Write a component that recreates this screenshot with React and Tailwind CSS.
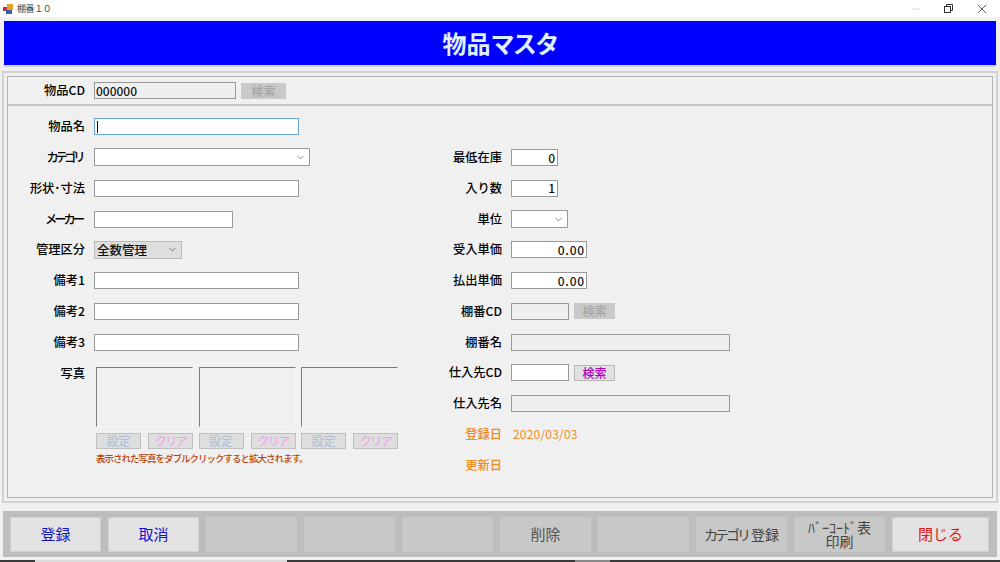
import { X, Minus, ChevronDown } from 'lucide-react';

const jp = 'font-["Noto_Sans_CJK_JP","Noto_Sans",sans-serif]';

// Right-aligned field label, wide enough to reach the input column
function Label({ children, className = 'text-black', width = 'w-[85px]' }) {
  return <div className={`${width} shrink-0 text-right text-[12.25px] leading-[17px] font-medium ${className}`}>{children}</div>;
}

function Box({ width, children, off, focus }) {
  const look = focus ? 'border-[#69a6d6] bg-white' : off ? 'border-[#999] bg-[#efefef]' : 'border-[#999] bg-white';
  return <div className={`h-[17px] shrink-0 border flex items-center px-[1px] text-[12px] font-medium text-[#111] ${look} ${width}`}>{children}</div>;
}

function Num({ width, value }) {
  return <Box width={width}><span className="ml-auto tracking-[0.8px]">{value}</span></Box>;
}

function Combo({ width, value, gray }) {
  return (
    <div className={`h-[18px] shrink-0 border flex items-center pl-[2px] pr-[3px] text-[12.5px] font-medium text-[#111] ${gray ? 'bg-[#dedede] border-[#bbb]' : 'bg-white border-[#999]'} ${width}`}>
      <span>{value}</span>
      <ChevronDown size={11} strokeWidth={1.6} className="ml-auto text-[#555]" />
    </div>
  );
}

function Search({ active, width = 'w-[41px]' }) {
  return (
    <div className={`h-[16px] shrink-0 flex items-center justify-center text-[12px] font-medium ${width} ${active ? 'bg-[#e1e1e1] border border-[#b8b8b8] text-[#b000c0]' : 'bg-[#c9c9c9] text-[#a5a5a5]'}`}>検索</div>
  );
}

function Row({ label, children, labelClass, width }) {
  return (
    <div className="h-[17px] flex items-center">
      <Label className={labelClass} width={width}>{label}</Label>
      <div className="flex items-center gap-[5px] ml-[9px]">{children}</div>
    </div>
  );
}

function PhotoCol() {
  return (
    <div className="w-[97px]">
      <div className="h-[60px] border border-t-[#7c7c7c] border-l-[#7c7c7c] border-r-[#f8f8f8] border-b-[#f8f8f8]"></div>
      <div className="flex justify-between mt-[6px]">
        <div className="h-[16px] w-[45px] bg-[#dedede] border border-[#c0c0c0] flex items-center justify-center text-[12px] text-[#a9bdd8]">設定</div>
        <div className="h-[16px] w-[45px] bg-[#dedede] border border-[#c0c0c0] flex items-center justify-center text-[12px] text-[#f19cef]"><span className="tracking-[-1.5px]">クリア</span></div>
      </div>
    </div>
  );
}

function FootBtn({ children, className = '', off }) {
  return (
    <div className={`h-[35px] flex items-center justify-center text-center leading-[14px] ${off ? 'bg-[#c8c8c8]' : 'bg-[#e3e3e3] border border-[#d0d0d0]'} ${className}`}>{children}</div>
  );
}

export default function App() {
  return (
    <div className={`w-[1000px] h-[562px] overflow-hidden bg-[#f0f0f0] flex flex-col ${jp}`}>
      {/* title bar */}
      <div className="h-[17px] bg-white flex items-center pl-[3px] pr-[10px] shrink-0">
        <svg width="10" height="10" viewBox="0 0 10 10">
          <rect x="4" y="0" width="6" height="6" fill="#e8a020" />
          <rect x="0" y="3" width="4" height="4" fill="#c83030" />
          <rect x="3" y="6" width="6" height="4" fill="#3060b0" />
        </svg>
        <span className="ml-[4px] text-[9px] text-[#444] tracking-[-0.4px]">棚番１０</span>
        <Minus size={12} strokeWidth={1} className="ml-auto text-[#aaa]" />
        <svg width="9" height="9" viewBox="0 0 9 9" fill="none" stroke="#333" strokeWidth="1" className="ml-[22px]">
          <rect x="0.5" y="2.5" width="6" height="6" />
          <path d="M2.5 2.5V0.5H8.5V6.5H6.5" />
        </svg>
        <X size={16} strokeWidth={1.2} className="ml-[21px] text-[#333]" />
      </div>

      {/* blue header */}
      <div className="mt-[4px] mx-[4px] h-[46px] shrink-0 bg-[#0000ff] border-b-2 border-b-[#d0d0ee] flex items-center justify-center">
        <h1 className="text-[24px] leading-none font-bold text-[#dff0ff]">物品<span className="tracking-[-1.7px]">マスタ</span></h1>
      </div>

      {/* main panel */}
      <div className="mt-[4px] mx-[2px] h-[432px] shrink-0 border-2 border-[#d2d2d2] p-[3px]">
        <div className="h-full border border-[#b4b4b4] flex flex-col">
          <div className="h-[29px] shrink-0 border-b-2 border-[#c6c6c6] flex items-center">
            <Row label="物品CD" width="w-[77px]">
              <Box width="w-[142px]" off>000000</Box>
              <Search width="w-[45px]" />
            </Row>
          </div>

          <div className="flex-1 flex">
            {/* left column */}
            <div className="w-[415px] shrink-0 pt-[12px] flex flex-col gap-[13.85px]">
              <Row label="物品名" width="w-[77px]"><Box width="w-[205px]" focus><span className="w-px h-[12px] bg-black ml-[1px]"></span></Box></Row>
              <Row label={<span className="tracking-[-3.4px] pr-[3px]">カテゴリ</span>} width="w-[77px]"><Combo width="w-[216px]" /></Row>
              <Row label="形状･寸法" width="w-[77px]"><Box width="w-[205px]" /></Row>
              <Row label={<span className="tracking-[-3px] pr-[3px]">メーカー</span>} width="w-[77px]"><Box width="w-[139px]" /></Row>
              <Row label="管理区分" width="w-[77px]"><Combo width="w-[88px]" value="全数管理" gray /></Row>
              <Row label="備考1" width="w-[77px]"><Box width="w-[205px]" /></Row>
              <Row label="備考2" width="w-[77px]"><Box width="w-[205px]" /></Row>
              <Row label="備考3" width="w-[77px]"><Box width="w-[205px]" /></Row>
              <div className="flex mt-[2px]">
                <div className="w-[77px] shrink-0 text-right text-[12.25px] leading-[13px] font-medium text-black">写真</div>
                <div className="ml-[11px] w-[302px]">
                  <div className="flex justify-between">
                    <PhotoCol />
                    <PhotoCol />
                    <PhotoCol />
                  </div>
                  <p className="mt-[2px] text-[9.5px] leading-[14px] font-medium text-[#b8430a] tracking-[-1px] whitespace-nowrap">表示された写真をダブルクリックすると拡大されます。</p>
                </div>
              </div>
            </div>

            {/* right column */}
            <div className="flex-1 pt-[43px] flex flex-col gap-[13.75px]">
              <Row label="最低在庫" width="w-[79px]"><Num width="w-[47px]" value="0" /></Row>
              <Row label="入り数" width="w-[79px]"><Num width="w-[47px]" value="1" /></Row>
              <Row label="単位" width="w-[79px]"><Combo width="w-[57px]" /></Row>
              <Row label="受入単価" width="w-[79px]"><Num width="w-[76px]" value="0.00" /></Row>
              <Row label="払出単価" width="w-[79px]"><Num width="w-[76px]" value="0.00" /></Row>
              <Row label="棚番CD" width="w-[79px]"><Box width="w-[58px]" off /><Search /></Row>
              <Row label="棚番名" width="w-[79px]"><Box width="w-[219px]" off /></Row>
              <Row label="仕入先CD" width="w-[79px]"><Box width="w-[58px]" /><Search active /></Row>
              <Row label="仕入先名" width="w-[79px]"><Box width="w-[219px]" off /></Row>
              <Row label="登録日" labelClass="text-[#f08a24]" width="w-[79px]">
                <span className="ml-[2px] text-[12px] tracking-[0.2px] text-[#f08a24]">2020/03/03</span>
              </Row>
              <Row label="更新日" labelClass="text-[#f08a24]" width="w-[79px]"></Row>
            </div>
          </div>
        </div>
      </div>

      {/* function keys */}
      <div className="mt-[8px] mx-[3px] h-[46px] shrink-0 bg-[#bdbdbd] flex items-center gap-[7px] pl-[7px]">
        <FootBtn className="w-[91px] text-[15px] text-[#1616c8]">登録</FootBtn>
        <FootBtn className="w-[91px] text-[15px] text-[#1616c8]">取消</FootBtn>
        <FootBtn off className="w-[91px]" />
        <FootBtn off className="w-[91px]" />
        <FootBtn off className="w-[91px]" />
        <FootBtn off className="w-[91px] text-[15px] text-[#555]">削除</FootBtn>
        <FootBtn off className="w-[91px]" />
        <FootBtn off className="w-[91px] text-[14px] text-[#444]"><span className="tracking-[-3px] pr-[3px]">カテゴリ</span>登録</FootBtn>
        <FootBtn off className="w-[91px] text-[14px] text-[#444]">ﾊﾞｰｺｰﾄﾞ表<br />印刷</FootBtn>
        <FootBtn className="w-[97px] text-[15px] text-[#e01a1a]">閉じる</FootBtn>
      </div>

      {/* taskbar edge */}
      <div className="mt-[3px] h-[2px] shrink-0 flex bg-[#3a3a3a]">
        <div className="ml-[35px] w-[252px] bg-[#dcdcdc]"></div>
        <div className="ml-[288px] w-[35px] bg-[#8a8a8a]"></div>
      </div>
    </div>
  );
}
